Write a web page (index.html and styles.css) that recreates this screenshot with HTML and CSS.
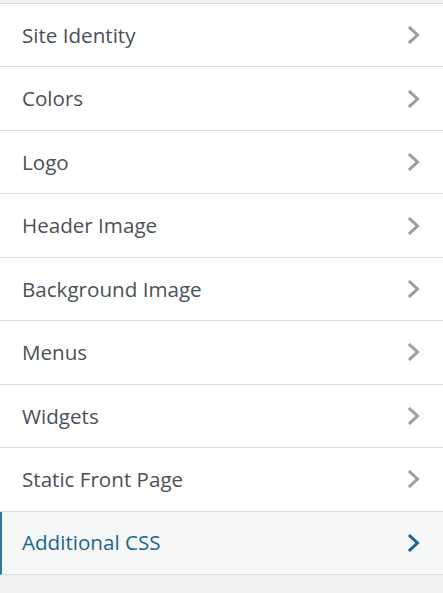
FILE: index.html
```html
<!DOCTYPE html>
<html>
<head>
<meta charset="utf-8">
<link rel="stylesheet" href="styles.css">
</head>
<body>
<ul class="sections">
  <li class="row"><span class="title">Site Identity</span><svg class="chev" viewBox="0 0 12 18"><path d="M2 2 L9.5 9 L2 16"/></svg></li>
  <li class="row"><span class="title">Colors</span><svg class="chev" viewBox="0 0 12 18"><path d="M2 2 L9.5 9 L2 16"/></svg></li>
  <li class="row"><span class="title">Logo</span><svg class="chev" viewBox="0 0 12 18"><path d="M2 2 L9.5 9 L2 16"/></svg></li>
  <li class="row"><span class="title">Header Image</span><svg class="chev" viewBox="0 0 12 18"><path d="M2 2 L9.5 9 L2 16"/></svg></li>
  <li class="row"><span class="title">Background Image</span><svg class="chev" viewBox="0 0 12 18"><path d="M2 2 L9.5 9 L2 16"/></svg></li>
  <li class="row"><span class="title">Menus</span><svg class="chev" viewBox="0 0 12 18"><path d="M2 2 L9.5 9 L2 16"/></svg></li>
  <li class="row"><span class="title">Widgets</span><svg class="chev" viewBox="0 0 12 18"><path d="M2 2 L9.5 9 L2 16"/></svg></li>
  <li class="row"><span class="title">Static Front Page</span><svg class="chev" viewBox="0 0 12 18"><path d="M2 2 L9.5 9 L2 16"/></svg></li>
  <li class="row active"><span class="title">Additional CSS</span><svg class="chev" viewBox="0 0 12 18"><path d="M2 2 L9.5 9 L2 16"/></svg></li>
</ul>
</body>
</html>
```
FILE: styles.css
```css
html, body {
  margin: 0;
  padding: 0;
  background: #f0f0f1;
  height: 100%;
}
body {
  font-family: "Open Sans", "Noto Sans", sans-serif;
  padding-top: 3px;
}
.sections {
  list-style: none;
  margin: 0;
  padding: 0;
  border-top: 1px solid #dcdcde;
}
.row {
  box-sizing: border-box;
  height: 63.44px;
  display: flex;
  align-items: center;
  justify-content: space-between;
  padding: 0 22px 0 22px;
  background: #fff;
  border-bottom: 1px solid #dcdcde;
  color: #4a5158;
  font-size: 20.6px;
}
.title {
  line-height: 1;
}
.chev {
  width: 12px;
  height: 18px;
  fill: none;
  stroke: #9a9da1;
  stroke-width: 3;
  stroke-linecap: square;
  margin-right: 1px;
}
.row.active {
  background: #f6f7f7;
  color: #1a6591;
  border-left: 2px solid #2a79a8;
  padding-left: 20px;
}
.row.active .chev {
  stroke: #1a6591;
}
```
